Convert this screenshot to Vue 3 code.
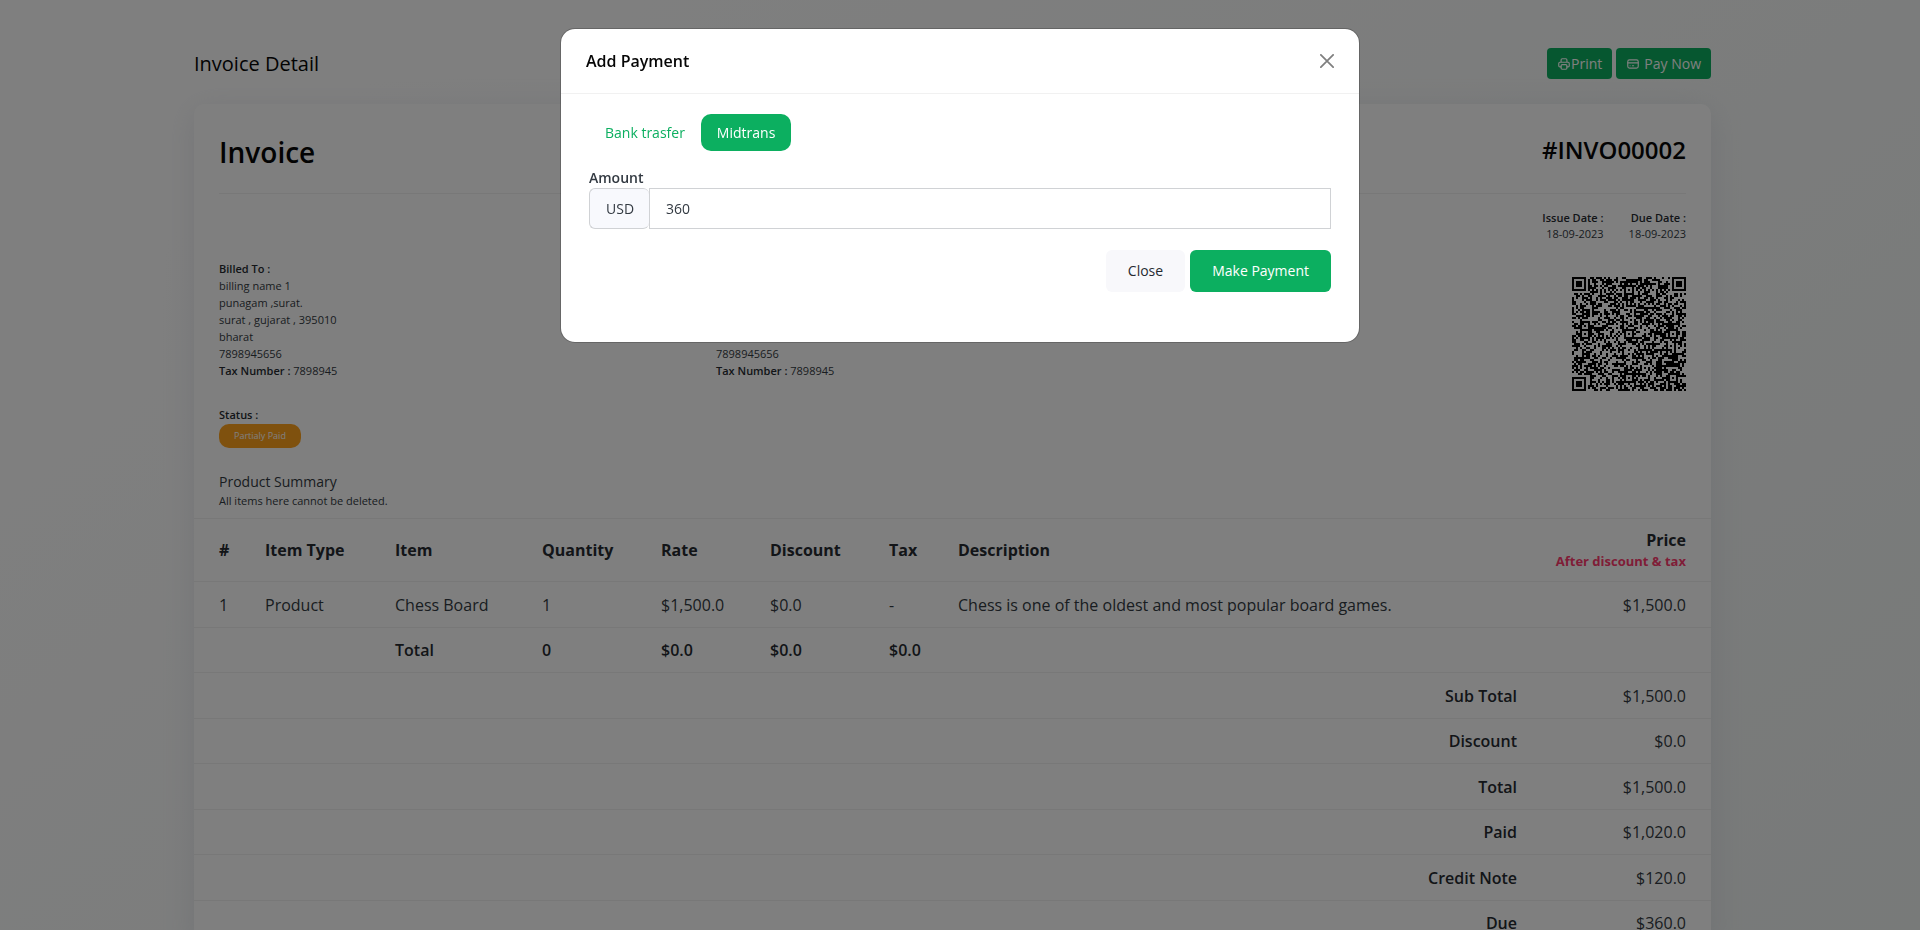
<script setup>
import { ref } from 'vue'

const amount = ref('360')

const address = ['billing name 1', 'punagam ,surat.', 'surat , gujarat , 395010', 'bharat', '7898945656']
const parties = [
  { title: 'Billed To :', lines: address, tax: '7898945' },
  { title: 'Shipped To :', lines: address, tax: '7898945' },
]

const summary = [
  ['Sub Total', '$1,500.0'],
  ['Discount', '$0.0'],
  ['Total', '$1,500.0'],
  ['Paid', '$1,020.0'],
  ['Credit Note', '$120.0'],
  ['Due', '$360.0'],
]

// QR symbol, version 10: 57 x 57 modules
const size = 57
function buildQr() {
  const grid = []
  let seed = 20230918
  for (let y = 0; y < size; y++) {
    grid.push([])
    for (let x = 0; x < size; x++) {
      seed = (Math.imul(seed, 1664525) + 1013904223) >>> 0
      grid[y].push(seed / 4294967296 < 0.52)
    }
  }
  const ring = (cx, cy, reach, dark) => {
    for (let dy = -reach; dy <= reach; dy++) {
      for (let dx = -reach; dx <= reach; dx++) {
        const x = cx + dx
        const y = cy + dy
        if (x < 0 || y < 0 || x >= size || y >= size) continue
        grid[y][x] = dark.includes(Math.max(Math.abs(dx), Math.abs(dy)))
      }
    }
  }
  for (let i = 8; i < size - 8; i++) {
    grid[6][i] = i % 2 === 0
    grid[i][6] = i % 2 === 0
  }
  for (const [x, y] of [[28, 6], [6, 28], [28, 28], [50, 28], [28, 50], [50, 50]]) ring(x, y, 2, [0, 2])
  for (const [x, y] of [[3, 3], [53, 3], [3, 53]]) ring(x, y, 4, [0, 1, 3])
  let d = ''
  grid.forEach((row, y) => row.forEach((on, x) => { if (on) d += `M${x} ${y}h1v1h-1z` }))
  return d
}
const qrPath = buildQr()
</script>

<template>
  <div class="page">
    <main class="container">
      <header class="page-header">
        <h4>Invoice Detail</h4>
        <div class="actions">
          <button type="button" class="btn-sm">
            <svg class="icon" viewBox="0 0 24 24"><path d="M17 17h2a2 2 0 0 0 2-2v-4a2 2 0 0 0-2-2H5a2 2 0 0 0-2 2v4a2 2 0 0 0 2 2h2M17 9V5a2 2 0 0 0-2-2H9a2 2 0 0 0-2 2v4" /><rect x="7" y="13" width="10" height="8" rx="2" /></svg>Print
          </button>
          <button type="button" class="btn-sm spaced">
            <svg class="icon" viewBox="0 0 24 24"><rect x="3" y="5" width="18" height="14" rx="3" /><path d="M3 10h18M7 15h.01M11 15h2" /></svg>Pay Now
          </button>
        </div>
      </header>

      <section class="card">
        <div class="title-row">
          <h2>Invoice</h2>
          <h3>#INVO00002</h3>
        </div>
        <div class="dates">
          <div><strong>Issue Date :</strong><br />18-09-2023</div>
          <div><strong>Due Date :</strong><br />18-09-2023</div>
        </div>
        <div class="parties">
          <div v-for="p in parties" :key="p.title">
            <strong>{{ p.title }}</strong>
            <div v-for="line in p.lines" :key="line">{{ line }}</div>
            <div><strong>Tax Number :</strong> {{ p.tax }}</div>
          </div>
          <svg class="qr" :viewBox="`0 0 ${size} ${size}`" shape-rendering="crispEdges"><path :d="qrPath" /></svg>
        </div>
        <div class="status">
          <strong>Status :</strong>
          <span class="badge">Partialy Paid</span>
        </div>
        <div class="products">
          <div class="products-title">Product Summary</div>
          <div>All items here cannot be deleted.</div>
        </div>

        <table>
          <colgroup>
            <col class="c-no" /><col class="c-type" /><col class="c-item" /><col class="c-qty" /><col class="c-rate" />
            <col class="c-disc" /><col class="c-tax" /><col /><col class="c-price" />
          </colgroup>
          <thead>
            <tr>
              <th>#</th><th>Item Type</th><th>Item</th><th>Quantity</th><th>Rate</th><th>Discount</th><th>Tax</th>
              <th>Description</th>
              <th class="end">Price<br /><small>After discount &amp; tax</small></th>
            </tr>
          </thead>
          <tbody>
            <tr>
              <td>1</td><td>Product</td><td>Chess Board</td><td>1</td><td>$1,500.0</td><td>$0.0</td><td>-</td>
              <td>Chess is one of the oldest and most popular board games.</td>
              <td class="end">$1,500.0</td>
            </tr>
            <tr class="totals">
              <td></td><td></td><td>Total</td><td>0</td><td>$0.0</td><td>$0.0</td><td>$0.0</td><td></td><td></td>
            </tr>
            <tr v-for="[label, value] in summary" :key="label">
              <td colspan="7"></td>
              <td class="end label">{{ label }}</td>
              <td class="end">{{ value }}</td>
            </tr>
          </tbody>
        </table>
      </section>
    </main>
  </div>

  <div class="backdrop">
    <div class="modal" role="dialog" aria-labelledby="modal-title">
      <div class="modal-header">
        <h5 id="modal-title">Add Payment</h5>
        <button type="button" class="close" aria-label="Close">
          <svg viewBox="0 0 16 16"><path d="M1 1l14 14M15 1L1 15" /></svg>
        </button>
      </div>
      <div class="modal-body">
        <div class="tabs">
          <button type="button" class="tab">Bank trasfer</button>
          <button type="button" class="tab active">Midtrans</button>
        </div>
        <form @submit.prevent>
          <label for="amount">Amount</label>
          <div class="input-group">
            <span class="prefix">USD</span>
            <input id="amount" v-model="amount" type="text" />
          </div>
          <div class="buttons">
            <button type="button" class="btn light">Close</button>
            <button type="submit" class="btn primary">Make Payment</button>
          </div>
        </form>
      </div>
    </div>
  </div>
</template>

<style>
html,
body {
  height: 100%;
  margin: 0;
  overflow: hidden;
}
</style>

<style scoped>
.page,
.backdrop {
  font-family: "Open Sans", "Noto Sans", sans-serif;
  font-size: 14px;
  line-height: 21px;
  color: #333a42;
}
.page *,
.backdrop * {
  box-sizing: border-box;
}
button,
input {
  font: inherit;
  margin: 0;
}
h2,
h3,
h4,
h5 {
  margin: 0;
  color: #060606;
}
strong {
  font-weight: 600;
  color: #262b31;
}
.page {
  height: 100vh;
  overflow: hidden;
  padding-right: 15px;
  background: linear-gradient(142deg, #ffffff 15%, #f0f4f3 100%);
}
.container {
  max-width: 1517px;
  margin: 0 auto;
  padding-top: 48px;
}
.page-header {
  display: flex;
  justify-content: space-between;
  align-items: center;
  margin-bottom: 25px;
}
.page-header h4 {
  font-size: 20px;
  line-height: 30px;
  font-weight: 500;
}
.actions {
  display: flex;
  gap: 4px;
}
.btn-sm {
  display: flex;
  align-items: center;
  height: 31px;
  padding: 0 10px;
  border: 0;
  border-radius: 4px;
  background: #0caf60;
  color: #fff;
  font-weight: 500;
}
.btn-sm.spaced {
  gap: 4px;
}
.icon {
  width: 14px;
  height: 14px;
  fill: none;
  stroke: currentColor;
  stroke-width: 2;
  stroke-linecap: round;
  stroke-linejoin: round;
}
.card {
  border-radius: 10px;
  background: #fff;
  box-shadow: 0 6px 30px rgba(182, 186, 203, 0.3);
  font-size: 11px;
  line-height: 17px;
  padding-top: 25px;
}
.title-row {
  display: flex;
  justify-content: space-between;
  align-items: flex-start;
  margin: 0 25px;
  height: 65px;
  border-bottom: 1px solid #f1f1f1;
}
h2 {
  font-size: 28px;
  line-height: 46px;
  font-weight: 600;
}
h3 {
  font-size: 24px;
  line-height: 42px;
  font-weight: 600;
}
.dates {
  display: flex;
  justify-content: flex-end;
  gap: 25px;
  margin: 16px 25px 0;
  line-height: 16px;
  text-align: right;
}
.parties {
  display: grid;
  grid-template-columns: repeat(3, 1fr);
  gap: 24px;
  margin: 18px 25px 0;
}
.qr {
  width: 114px;
  height: 114px;
  margin-top: 17px;
  justify-self: end;
}
.status {
  margin: 15px 25px 0;
}
.status strong {
  display: block;
}
.badge {
  display: block;
  width: fit-content;
  margin-top: 1px;
  padding: 0 15px;
  border-radius: 10px;
  background: #ffa21d;
  color: #fff;
  font-size: 9px;
  line-height: 24px;
}
.products {
  margin: 24px 25px 9px;
}
.products-title {
  font-size: 14px;
  line-height: 20px;
}
table {
  width: 100%;
  table-layout: fixed;
  border-collapse: collapse;
  font-size: 16px;
  line-height: 24px;
}
.c-no { width: 46px; }
.c-type { width: 130px; }
.c-item { width: 147px; }
.c-qty { width: 119px; }
.c-rate { width: 109px; }
.c-disc { width: 119px; }
.c-tax { width: 69px; }
.c-price { width: 169px; }
th,
td {
  padding: 0 0 0 25px;
  text-align: left;
  white-space: nowrap;
  border-bottom: 1px solid #f1f1f1;
}
thead tr {
  height: 63px;
}
th {
  font-weight: 700;
  color: #262b31;
  line-height: 20px;
  border-top: 1px solid #f1f1f1;
}
th small {
  font-size: 13px;
  color: #ff3a6e;
}
tbody tr {
  height: 45px;
}
tbody tr:nth-child(odd) {
  height: 46px;
}
.end {
  padding: 0 25px 0 0;
  text-align: right;
}
.totals td,
.label {
  font-weight: 600;
  color: #262b31;
}
.backdrop {
  position: fixed;
  inset: 0;
  padding: 28px 16px;
  background: rgba(0, 0, 0, 0.5);
}
.modal {
  max-width: 800px;
  margin: 0 auto;
  border: 1px solid rgba(0, 0, 0, 0.2);
  border-radius: 15px;
  background: #fff;
  background-clip: padding-box;
}
.modal-header {
  display: flex;
  justify-content: space-between;
  align-items: center;
  height: 65px;
  padding: 0 25px;
  border-bottom: 1px solid #f1f1f1;
}
h5 {
  font-size: 16px;
  line-height: 24px;
  font-weight: 600;
}
.close {
  display: flex;
  padding: 0;
  border: 0;
  background: none;
}
.close svg {
  width: 14px;
  height: 14px;
  fill: none;
  stroke: #7f7f7f;
  stroke-width: 2;
  stroke-linecap: round;
}
.modal-body {
  padding: 20px 28px 50px;
}
.tabs {
  display: flex;
  margin-bottom: 17px;
}
.tab {
  height: 37px;
  padding: 0 16px;
  border: 0;
  border-radius: 10px;
  background: none;
  color: #0caf60;
}
.tab.active {
  background: #0caf60;
  color: #fff;
}
label {
  display: block;
  line-height: 20px;
  font-weight: 600;
}
.input-group {
  display: flex;
  height: 41px;
}
.prefix {
  display: flex;
  align-items: center;
  padding: 0 15px 0 16px;
  border: 1px solid #d0d2d5;
  border-right: 0;
  border-radius: 6px;
  background: #f8f9fd;
}
input {
  flex: 1;
  min-width: 0;
  padding: 0 16px;
  border: 1px solid #d0d2d5;
  border-radius: 0;
  color: #333a42;
  background: #fff;
  outline: none;
}
.buttons {
  display: flex;
  justify-content: flex-end;
  gap: 5px;
  margin-top: 21px;
}
.btn {
  height: 42px;
  padding: 0 22px 2px;
  border: 0;
  border-radius: 6px;
  font-weight: 500;
}
.light {
  background: #f8f8fb;
  color: #262b31;
}
.primary {
  background: #0caf60;
  color: #fff;
}
</style>
